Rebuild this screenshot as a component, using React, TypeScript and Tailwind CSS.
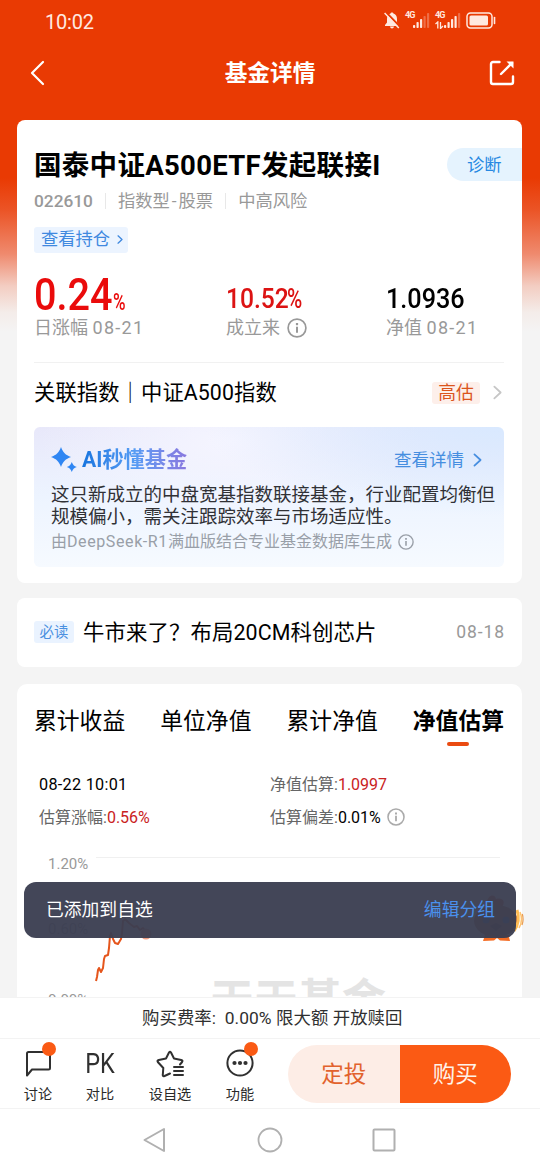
import type { ReactNode } from "react"

const tabs = [
  { label: "累计收益", active: false },
  { label: "单位净值", active: false },
  { label: "累计净值", active: false },
  { label: "净值估算", active: true },
]

function Chevron({ className, width = 2 }: { className: string; width?: number }) {
  return (
    <svg viewBox="0 0 10 16" fill="none" stroke="currentColor" strokeWidth={width} className={className}>
      <path d="M1.5 1.5 8.5 8l-7 6.5" strokeLinecap="round" strokeLinejoin="round" />
    </svg>
  )
}

function Info({ className }: { className: string }) {
  return (
    <svg viewBox="0 0 20 20" fill="none" stroke="currentColor" className={className}>
      <circle cx="10" cy="10" r="8.9" strokeWidth="1.7" />
      <path d="M10 8.7v6" strokeWidth="2" />
      <path d="M10 5v2.2" strokeWidth="2.2" />
    </svg>
  )
}

function Signal({ bars }: { bars: number }) {
  return (
    <svg viewBox="0 0 17 18" className="h-[18px] w-[17px]" fill="#ffe9e0">
      {[0, 1, 2, 3, 4].map((i) => (
        <rect
          key={i}
          x={i * 3.5}
          y={14 - i * 3}
          width="2.2"
          height={3 + i * 3}
          rx="0.8"
          opacity={i < bars ? 1 : 0.3}
        />
      ))}
    </svg>
  )
}

function StatusBar() {
  return (
    <div className="flex h-[43px] items-center pl-[45px] pr-[44px] text-[#ffe9e0]">
      <span className="pt-px text-[20px] leading-6 tracking-[-0.2px]">10:02</span>
      <div className="ml-auto flex h-[18px] items-center pb-[2px]">
        <svg viewBox="0 0 16 17" className="mr-[5px] h-[17px] w-[16px]">
          <path
            d="M8 .5c-.8 0-1.300.4-1.400 1C4.200 2.200 3 4.300 3 7v3.500L1 13v.9h14V13l-2-2.500V7c0-2.700-1.200-4.800-3.600-5.500C9.300.9 8.800.5 8 .5ZM6 14.500c.2 1.200 1 1.900 2 1.900s1.800-.7 2-1.900z"
            fill="#ffe9e0"
          />
          <path d="M1.800 0 15.800 14.500" stroke="#e93a03" strokeWidth="2" />
          <path d="M.6 1 14.800 16" stroke="#ffe9e0" strokeWidth="1.500" />
        </svg>
        <div className="flex h-[18px] w-[27px] items-start">
          <span className="w-[8px] text-[9px] font-bold leading-[9px] tracking-[-1px]">4G</span>
          <Signal bars={3} />
        </div>
        <div className="ml-[3px] flex h-[18px] w-[27px] items-start">
          <div className="flex w-[9px] flex-col">
            <span className="text-[9px] font-bold leading-[9px] tracking-[-1px]">4G</span>
            <svg viewBox="0 0 9 8" className="mt-px h-2 w-[9px]" stroke="#ffe9e0" fill="none" strokeWidth="1.300">
              <path d="M.5 3 2.800 1v6.500M5.500 1v6.500L8 5" />
            </svg>
          </div>
          <Signal bars={4} />
        </div>
        <svg viewBox="0 0 30 17" className="ml-[4px] h-[17px] w-[30px]" fill="none">
          <rect x="1" y="1" width="25" height="15" rx="3.500" stroke="#ffe9e0" strokeWidth="1.500" />
          <rect x="3.500" y="3.500" width="18.500" height="10" rx="1.500" fill="#ffe9e0" />
          <path d="M28.500 5.500v6" stroke="#ffe9e0" strokeWidth="1.600" strokeLinecap="round" />
        </svg>
      </div>
    </div>
  )
}

function Header() {
  return (
    <header className="flex h-[60px] items-center justify-between pl-[30px] pr-[25px] text-white">
      <svg viewBox="0 0 15 26" className="h-[26px] w-[15px]" fill="none" stroke="currentColor" strokeWidth="2.200">
        <path d="M13 2 2 13l11 11" strokeLinecap="round" strokeLinejoin="round" />
      </svg>
      <h1 className="pl-[6px] pt-[2px] text-[22.7px] font-bold leading-8">基金详情</h1>
      <svg viewBox="0 0 26 26" className="h-[26px] w-[26px]" fill="none" stroke="currentColor" strokeWidth="2.400">
        <path d="M10.500 2H4a2 2 0 0 0-2 2v18a2 2 0 0 0 2 2h18a2 2 0 0 0 2-2v-5.500" strokeLinecap="round" />
        <path d="M12 14 23 3" strokeLinecap="round" />
        <path d="M17.500 1.500H24.500V8.500Z" fill="currentColor" stroke="none" />
      </svg>
    </header>
  )
}

function Metrics() {
  return (
    <div className="mt-[20px] flex h-[67px] text-[18px] text-[#999]">
      <div className="w-[192px]">
        <div className="flex h-[43px] items-end text-[#ea0b0b]">
          <span className="w-[79px] origin-left scale-x-[0.88] text-[45px] font-medium leading-[43px]">0.24</span>
          <span className="origin-left scale-x-[0.74] text-[23px] font-medium leading-[26px]">%</span>
        </div>
        <p className="leading-6">日涨幅 <span className="tracking-[1.3px]">08-21</span></p>
      </div>
      <div className="w-[160px]">
        <div className="flex h-[43px] items-end text-[28px] font-medium leading-[34px] text-[#dc1313]">
          <span className="w-[61px] origin-left scale-x-[0.88]">10.52</span>
          <span className="origin-left scale-x-[0.74]">%</span>
        </div>
        <p className="flex items-center leading-6">
          成立来 <Info className="ml-[7px] h-5 w-5" />
        </p>
      </div>
      <div>
        <div className="flex h-[43px] items-end text-[28px] font-medium leading-[34px] text-black">
          <span className="origin-left scale-x-[0.9]">1.0936</span>
        </div>
        <p className="leading-6">净值 <span className="tracking-[1.3px]">08-21</span></p>
      </div>
    </div>
  )
}

function AiPanel() {
  return (
    <div className="h-[140px] rounded-md bg-[radial-gradient(ellipse_at_100%_0%,#d9e9ff_0%,rgba(226,238,255,0)_45%),radial-gradient(ellipse_at_42%_10%,#f5f5ff_0%,rgba(245,245,255,0)_50%),linear-gradient(180deg,#e8e8fa_0%,#edf4ff_50%,#f6faff_100%)] pl-[17px]">
      <div className="flex h-[57px] items-center pr-[22px] pt-[9px]">
        <svg viewBox="0 0 26 26" className="h-[26px] w-[26px]" fill="#2f86f3">
          <path d="M10 0c2 5.500 4.500 8 10 10-5.500 2-8 4.500-10 10C8 14.500 5.500 12 0 10 5.500 8 8 5.500 10 0Z" />
          <path d="M20.800 15c1 2.800 2.200 4 5 5-2.800 1-4 2.200-5 5-1-2.800-2.200-4-5-5 2.800-1 4-2.200 5-5Z" />
        </svg>
        <span className="ml-[5px] bg-gradient-to-r from-[#1675df] via-[#559cf4] to-[#8878df] bg-clip-text text-[21.2px] font-bold leading-[30px] text-transparent">
          AI秒懂基金
        </span>
        <span className="ml-auto text-[17.5px] leading-6 text-[#468ee0]">查看详情</span>
        <Chevron className="ml-[9px] h-[14px] w-[9px] text-[#468ee0]" />
      </div>
      <p className="w-[450px] whitespace-nowrap text-[18.5px] leading-[22px] text-[#303136]">
        这只新成立的中盘宽基指数联接基金，行业配置均衡但
        <br />
        规模偏小，需关注跟踪效率与市场适应性。
      </p>
      <p className="mt-[2px] flex items-center text-[16px] leading-6 text-[#999fa8]">
        由<span className="tracking-[0.6px]">DeepSeek-R1</span>满血版结合专业基金数据库生成
        <Info className="ml-[6px] h-4 w-4" />
      </p>
    </div>
  )
}

function FundCard() {
  return (
    <section className="h-[463.500px] rounded-lg bg-white pl-[17px] pr-[18px] pt-[28px]">
      <div className="-mr-[18px] flex h-[34px] items-center justify-between">
        <h2 className="whitespace-nowrap pt-[2px] text-[27.5px] font-bold leading-[34px] tracking-[0.3px] text-black">国泰中证A500ETF发起联接I</h2>
        <span className="flex h-[33px] w-[75px] items-center rounded-l-full bg-[#e5f3fe] pl-[20px] pt-[2px] text-[17.3px] text-[#2688e2]">诊断</span>
      </div>
      <div className="mt-[7px] flex h-6 items-center text-[17.3px] leading-6 text-[#999]">
        <span className="font-medium">022610</span>
        <i className="mx-[12px] h-4 w-px bg-[#e8e8e8]" />
        <span>指数型<span className="mx-[2px]">-</span>股票</span>
        <i className="mx-[12px] h-4 w-px bg-[#e8e8e8]" />
        <span>中高风险</span>
      </div>
      <div className="mt-[14px] flex h-[26px] w-[94px] items-center rounded-[3px] bg-[#ecf4ff] pl-[7px] pt-px text-[17.3px] text-[#4089df]">
        查看持仓
        <Chevron className="mb-px ml-[7px] h-[9px] w-[6px]" width={2.400} />
      </div>
      <Metrics />
      <div className="mt-[22px] h-px bg-[#f1f1f1]" />
      <div className="flex h-[64px] items-center pb-[4px]">
        <span className="pt-px text-[21.3px] leading-8 tracking-[0.1px] text-black">关联指数｜中证A500指数</span>
        <span className="ml-auto flex h-[22px] w-[48px] items-center justify-center rounded-[3px] bg-[#fdefea] pt-px text-[17.8px] text-[#db551d]">高估</span>
        <Chevron className="ml-[13px] mr-[2px] h-[15px] w-[9px] text-[#c6c6c6]" />
      </div>
      <AiPanel />
    </section>
  )
}

function NewsCard() {
  return (
    <section className="mt-[14.500px] flex h-[69px] items-center rounded-lg bg-white px-[17px]">
      <span className="flex h-[22px] w-[40px] items-center justify-center rounded-[3px] bg-[#eaf3ff] pt-[2px] text-[14.4px] text-[#4a90e0]">必读</span>
      <span className="ml-[9px] pt-px text-[21.4px] leading-8 tracking-[0.1px] text-black">牛市来了？布局20CM科创芯片</span>
      <span className="ml-auto text-[17.5px] tracking-[0.9px] text-[#999]">08-18</span>
    </section>
  )
}

function Figure({ label, children }: { label: string; children: ReactNode }) {
  return (
    <div className="flex items-center text-[16px] text-[#666]">
      <span>{label}:</span>
      {children}
    </div>
  )
}

function Chart() {
  return (
    <div className="relative mt-[22px] h-[141px] overflow-hidden text-[15px] leading-4 text-[#999]">
      <div className="flex h-[65px] items-start pl-[13px]">
        <span>1.20%</span>
        <i className="ml-[8px] mt-px h-px w-[404px] bg-[#f0f0f0]" />
      </div>
      <div className="h-[71px] pl-[13px]">0.60%</div>
      <div className="pl-[13px]">0.00%</div>
      <span className="absolute left-[175px] top-[120px] whitespace-nowrap text-[44px] font-bold leading-[50px] text-[#e4e4e4]">天天基金</span>
      {/* intraday estimate line */}
      <svg viewBox="0 0 60 70" className="absolute left-[57px] top-[58px] h-[70px] w-[60px]" fill="none">
        <path
          d="M4 67l1-4 1-7 1-2 2 4 2-4 1-9 1-3 3-1 1-7 1-12 1-3 2 6 2 4 3 1 3-5 1-6 1-12 2-2 4 4 5 4 3-1 3 4 3-2 4 5"
          stroke="#e5551c"
          strokeWidth="2"
          strokeLinejoin="round"
        />
        <circle cx="54" cy="20" r="5.500" fill="#ee9d83" />
      </svg>
    </div>
  )
}

function Mascot() {
  return (
    <svg viewBox="0 0 54 52" className="absolute left-[470px] top-[893px] h-[52px] w-[54px]" fill="none">
      <path d="M17 10c0-8 8-10 9-4 7-2 10 3 6 8z" fill="#e85020" />
      <ellipse cx="26" cy="28" rx="22" ry="16" fill="#b1673e" />
      <circle cx="16" cy="27" r="3.500" fill="#245fbc" />
      <circle cx="36" cy="27" r="3.500" fill="#245fbc" />
      <path d="m20 33 6-3 6 3-6 5z" fill="#703c25" />
      <path d="M15 42h9l3 2 3-2h9v2l1 4-10-.5-3-2.500-3 2.500-11 .5z" fill="#f46d25" />
      <path d="M44 38c5-7 5-15 3-21" stroke="#ffbd54" strokeWidth="3" />
      <path d="M49 35c3-5 3-11 1-16" stroke="#ffc36e" strokeWidth="1.500" />
      <path d="M52 32c1.500-4 1.500-7 .3-11" stroke="#e99b50" strokeWidth="1.200" />
    </svg>
  )
}

function EstimateCard() {
  return (
    <section className="mt-[17px] h-[313px] rounded-t-[10px] bg-white px-[18px]">
      <nav className="flex justify-between pt-[22px]">
        {tabs.map((t) => (
          <div key={t.label} className="-ml-px flex flex-col items-center">
            <span className={t.active ? "text-[22.800px] font-bold leading-8 text-black" : "text-[22.800px] leading-8 text-black"}>{t.label}</span>
            <i className={t.active ? "mt-[4px] h-[4px] w-[22px] rounded-full bg-[#ea4b11]" : "mt-[4px] h-[4px] w-[22px]"} />
          </div>
        ))}
      </nav>
      <div className="mt-[22px] grid grid-cols-[231px_1fr] pl-[4px] leading-[33px]">
        <span className="text-[16.2px] tracking-[0.3px] text-black">08-22 10:01</span>
        <Figure label="净值估算"><span className="text-[#c92222]">1.0997</span></Figure>
        <Figure label="估算涨幅"><span className="text-[#c92222]">0.56%</span></Figure>
        <Figure label="估算偏差">
          <span className="text-black">0.01%</span>
          <Info className="ml-[6px] h-[18px] w-[18px] text-[#aaa]" />
        </Figure>
      </div>
      <Chart />
    </section>
  )
}

function Action({ label, dot, className, children }: { label: string; dot?: boolean; className: string; children: ReactNode }) {
  return (
    <button className={className}>
      <span className="relative flex h-[34px] items-center justify-center">
        {children}
        {dot && <i className="absolute -right-[4px] -top-[5px] h-[14px] w-[14px] rounded-full bg-[#fa5a14]" />}
      </span>
      <span className="mt-[3px] whitespace-nowrap text-[14.2px] leading-5 text-[#292929]">{label}</span>
    </button>
  )
}

function BottomBar() {
  return (
    <div className="flex h-[72px] items-start border-y border-[#f3f3f3] bg-white pl-[20px] text-[#303030]">
      <Action label="讨论" dot className="mt-[8px] flex w-[36px] flex-col items-center">
        <svg viewBox="0 0 28 28" className="h-7 w-7" fill="none" stroke="currentColor" strokeWidth="2">
          <path d="M3 25.500V3.500Q3 2 4.500 2h20Q26 2 26 3.500V18q0 1.500-1.500 1.500H8L3 25.500Z" strokeLinejoin="round" />
        </svg>
      </Action>
      <Action label="对比" className="ml-[26px] mt-[8px] flex w-[36px] flex-col items-center">
        <span className="origin-center scale-x-[0.87] pt-px text-[27px] leading-8">PK</span>
      </Action>
      <Action label="设自选" className="ml-[30px] mt-[8px] flex w-[44px] flex-col items-center">
        <svg viewBox="0 0 30 28" className="h-7 w-[30px]" fill="none" stroke="currentColor" strokeWidth="2" strokeLinecap="round" strokeLinejoin="round">
          <path d="M15 23.500 9.500 26q-2 .8-1.700-1.300L8.300 18 2.800 12q-1-1.500 1-2L11 8.500l3-6q1-1.500 2 0l3 6 7.200 1.500q2 .5.900 2L25 14.500" />
          <path d="M19 17h9M19 21h9M19 25h9" />
        </svg>
      </Action>
      <Action label="功能" dot className="ml-[30px] mt-[8px] flex w-[36px] flex-col items-center">
        <svg viewBox="0 0 28 28" className="mb-px h-7 w-7" fill="none" stroke="currentColor" strokeWidth="2">
          <circle cx="14" cy="14" r="12.600" />
          <g fill="currentColor" stroke="none">
            <circle cx="8.500" cy="14" r="2.100" />
            <circle cx="14" cy="14" r="2.100" />
            <circle cx="19.500" cy="14" r="2.100" />
          </g>
        </svg>
      </Action>
      <div className="ml-[30px] mt-[6px] flex h-[58px] w-[223px] overflow-hidden rounded-full text-[22.500px]">
        <button className="w-1/2 bg-[#fdede6] pt-[2px] text-[#e2622d]">定投</button>
        <button className="w-1/2 bg-[#fb5a14] pt-[2px] text-[#fff3e8]">购买</button>
      </div>
    </div>
  )
}

function SystemNav() {
  return (
    <div className="flex h-[61px] items-center justify-between bg-white pl-[142px] pr-[143px] text-[#b0b0b0]">
      <svg viewBox="0 0 26 26" className="h-[26px] w-[26px]" fill="none" stroke="currentColor" strokeWidth="2" strokeLinejoin="round">
        <path d="M22 2v22L2.500 13z" />
      </svg>
      <svg viewBox="0 0 26 26" className="h-[26px] w-[26px]" fill="none" stroke="currentColor" strokeWidth="1.800">
        <circle cx="13" cy="13" r="11.500" />
      </svg>
      <svg viewBox="0 0 26 26" className="h-[26px] w-[26px]" fill="none" stroke="currentColor" strokeWidth="2">
        <rect x="2.500" y="2.500" width="21" height="21" rx="1" />
      </svg>
    </div>
  )
}

export default function App() {
  return (
    <div className="relative flex h-[1170px] w-[540px] flex-col overflow-hidden bg-[#f4f4f4] bg-[linear-gradient(180deg,#e93a03_0px,#e93a03_178px,#eb5426_210px,#ef8a6e_254px,#f3cdc2_286px,#f4ece9_312px,#f4f4f4_332px)] font-['Roboto','Noto_Sans_CJK_SC',sans-serif]">
      <StatusBar />
      <Header />
      <main className="h-[894px] shrink-0 overflow-hidden pl-[17px] pr-[18px] pt-[17px]">
        <FundCard />
        <NewsCard />
        <EstimateCard />
      </main>
      <div className="flex h-[41px] shrink-0 items-center whitespace-pre border-t border-[#f3f3f3] bg-white pl-[142px] pt-px text-[17.4px] tracking-[0.05px] text-[#303030]">
        {"购买费率:  0.00% 限大额 开放赎回"}
      </div>
      <BottomBar />
      <SystemNav />
      <Mascot />
      <div className="absolute left-[24px] top-[882px] flex h-[55.500px] w-[492px] items-center justify-between rounded-xl bg-[#3b3e51]/96 pl-[22px] pr-[21px] pt-[2px] text-[17.800px]">
        <span className="text-white">已添加到自选</span>
        <span className="text-[#4a91ed]">编辑分组</span>
      </div>
    </div>
  )
}
